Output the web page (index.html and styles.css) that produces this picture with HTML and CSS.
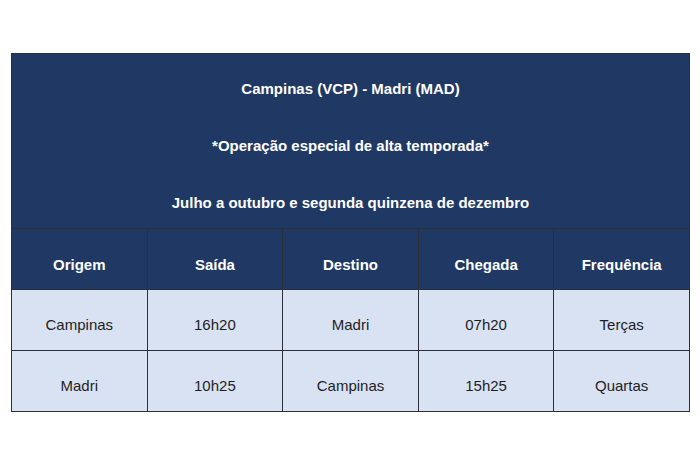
FILE: index.html
```
<!DOCTYPE html>
<html lang="pt">
<head>
<meta charset="utf-8">
<title>Campinas (VCP) - Madri (MAD)</title>
<link rel="stylesheet" href="styles.css">
</head>
<body>
<div class="page">
  <table class="schedule">
    <thead>
      <tr>
        <th class="title" colspan="5">
          <div class="title-lines">
            <p>Campinas (VCP) - Madri (MAD)</p>
            <p>*Operação especial de alta temporada*</p>
            <p>Julho a outubro e segunda quinzena de dezembro</p>
          </div>
        </th>
      </tr>
      <tr class="cols">
        <th>Origem</th>
        <th>Saída</th>
        <th>Destino</th>
        <th>Chegada</th>
        <th>Frequência</th>
      </tr>
    </thead>
    <tbody>
      <tr>
        <td>Campinas</td>
        <td>16h20</td>
        <td>Madri</td>
        <td>07h20</td>
        <td>Terças</td>
      </tr>
      <tr>
        <td>Madri</td>
        <td>10h25</td>
        <td>Campinas</td>
        <td>15h25</td>
        <td>Quartas</td>
      </tr>
    </tbody>
  </table>
</div>
</body>
</html>
```
FILE: styles.css
```
html, body {
  margin: 0;
  padding: 0;
  background: #ffffff;
}

.page {
  padding: 53px 0 0 11px;
  font-family: "Liberation Sans", Arial, sans-serif;
}

.schedule {
  width: 679px;
  border-collapse: collapse;
  table-layout: fixed;
  font-size: 15px;
}

.schedule th,
.schedule td {
  border: 1px solid #2a2f3a;
  text-align: center;
  vertical-align: middle;
  padding: 0;
}

.schedule th {
  background: #1f3864;
  color: #ffffff;
  font-weight: bold;
}

.schedule .title {
  padding: 26px 0 16px;
}

.title-lines {
  display: flex;
  flex-direction: column;
  gap: 39px;
}

.title-lines p {
  margin: 0;
  line-height: 18px;
}

.cols th {
  height: 50px;
  padding-top: 10px;
}

.schedule td {
  background: #d9e2f3;
  color: #1e1e1e;
  height: 51px;
  padding-top: 9px;
}
```
